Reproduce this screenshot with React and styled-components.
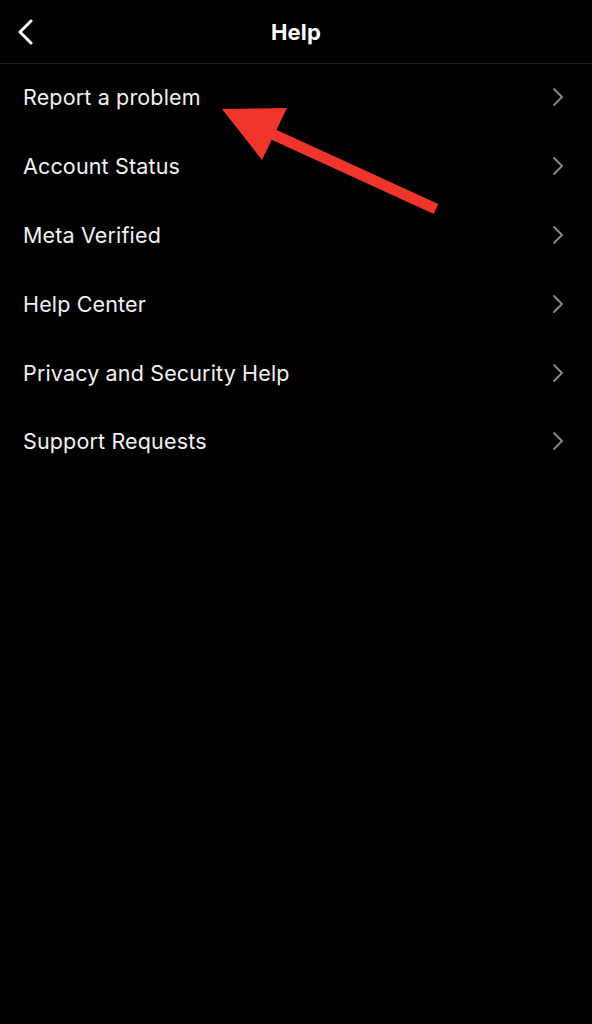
import styled, { createGlobalStyle } from 'styled-components'

const GlobalStyle = createGlobalStyle`
  html, body {
    margin: 0;
    padding: 0;
    background: #000;
  }
  body {
    font-family: Inter, "Liberation Sans", Arial, sans-serif;
    -webkit-font-smoothing: antialiased;
  }
`

const Screen = styled.div`
  position: relative;
  width: 592px;
  min-height: 1024px;
  background: #000;
  color: #f5f5f5;
  overflow: hidden;
`

const Header = styled.header`
  height: 63px;
  display: grid;
  grid-template-columns: 60px 1fr 60px;
  align-items: center;
  border-bottom: 1px solid #1f1f1f;
`

const BackButton = styled.button`
  background: none;
  border: 0;
  padding: 0 0 0 17px;
  height: 100%;
  display: flex;
  align-items: center;
  color: #fff;
  cursor: pointer;
`

const Title = styled.h1`
  margin: 0;
  text-align: center;
  font-size: 22px;
  font-weight: 700;
  color: #fff;
  letter-spacing: 0.2px;
`

const Menu = styled.ul`
  list-style: none;
  margin: -1px 0 0;
  padding: 0;
`

const Row = styled.li`
  height: 68.8px;
  display: flex;
  align-items: center;
  justify-content: space-between;
  padding: 0 28px 0 23px;
`

const Label = styled.span`
  font-size: 21.5px;
  font-weight: 400;
  color: #f2f2f2;
  letter-spacing: 0.15px;
`

const ArrowLayer = styled.svg`
  position: absolute;
  left: 0;
  top: 0;
  pointer-events: none;
`

const items = [
  'Report a problem',
  'Account Status',
  'Meta Verified',
  'Help Center',
  'Privacy and Security Help',
  'Support Requests',
]

function Chevron() {
  return (
    <svg width="12" height="20" viewBox="0 0 12 20" fill="none">
      <path d="M2 2 L10 10 L2 18" stroke="#8a8a8a" strokeWidth="1.8" strokeLinecap="round" strokeLinejoin="round" />
    </svg>
  )
}

function BackIcon() {
  return (
    <svg width="18" height="26" viewBox="0 0 18 26" fill="none">
      <path d="M14 2 L3 13 L14 24" stroke="#fff" strokeWidth="3" strokeLinecap="round" strokeLinejoin="round" />
    </svg>
  )
}

function App() {
  return (
    <Screen>
      <GlobalStyle />
      <Header>
        <BackButton aria-label="Back">
          <BackIcon />
        </BackButton>
        <Title>Help</Title>
        <span />
      </Header>
      <Menu>
        {items.map((item) => (
          <Row key={item}>
            <Label>{item}</Label>
            <Chevron />
          </Row>
        ))}
      </Menu>
      <ArrowLayer width="592" height="260" viewBox="0 0 592 260">
        <line x1="268" y1="132" x2="436" y2="209" stroke="#f0362c" strokeWidth="11" />
        <polygon points="222,109 287,108 262,160" fill="#f0362c" />
      </ArrowLayer>
    </Screen>
  )
}

export default App
